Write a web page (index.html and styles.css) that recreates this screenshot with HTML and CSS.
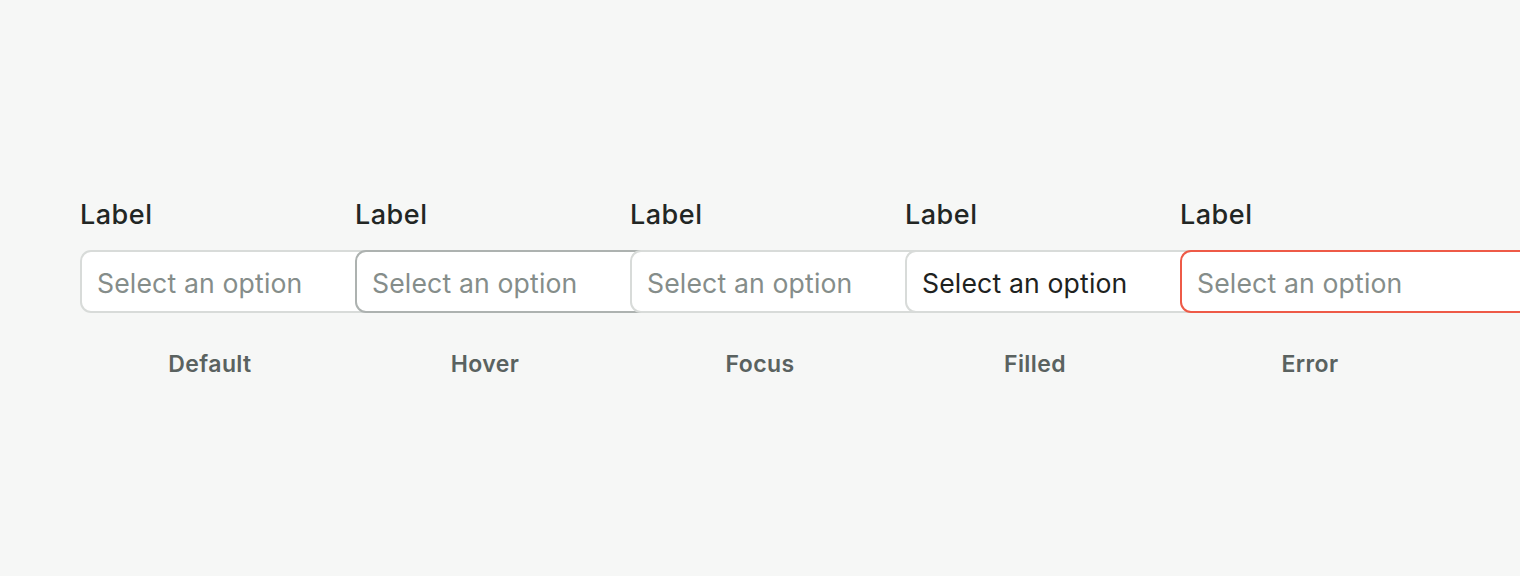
FILE: index.html
```html
<!DOCTYPE html>
<html>
<head>
<meta charset="utf-8">
<link rel="stylesheet" href="styles.css">
</head>
<body>
<div class="row">
  <div class="item">
    <div class="field">
      <div class="label">Label</div>
      <div class="select"><span class="placeholder">Select an option</span></div>
    </div>
    <div class="caption">Default</div>
  </div>
  <div class="item">
    <div class="field">
      <div class="label">Label</div>
      <div class="select hover"><span class="placeholder">Select an option</span></div>
    </div>
    <div class="caption">Hover</div>
  </div>
  <div class="item">
    <div class="field">
      <div class="label">Label</div>
      <div class="select focus"><span class="placeholder">Select an option</span></div>
    </div>
    <div class="caption">Focus</div>
  </div>
  <div class="item">
    <div class="field">
      <div class="label">Label</div>
      <div class="select filled"><span class="value">Select an option</span></div>
    </div>
    <div class="caption">Filled</div>
  </div>
  <div class="item">
    <div class="field">
      <div class="label">Label</div>
      <div class="select error"><span class="placeholder">Select an option</span></div>
    </div>
    <div class="caption">Error</div>
  </div>
</div>
</body>
</html>
```
FILE: styles.css
```css
html, body {
  margin: 0;
  padding: 0;
  background: #f6f7f6;
  font-family: Inter, "Noto Sans", sans-serif;
  overflow: hidden;
  height: 576px;
}
.row {
  display: flex;
  gap: 15px;
  padding: 197px 0 0 80px;
}
.item {
  width: 260px;
  flex: none;
  display: flex;
  flex-direction: column;
  gap: 36px;
}
.field {
  display: flex;
  flex-direction: column;
  gap: 17px;
}
.label {
  font-size: 27px;
  letter-spacing: 0.5px;
  font-weight: 500;
  color: #222624;
  line-height: 36px;
}
.select {
  width: 380px;
  height: 63px;
  box-sizing: border-box;
  background: #fff;
  border: 2px solid #d8dbd9;
  border-radius: 11px;
  display: flex;
  align-items: center;
  padding: 3px 15px 0;
  font-size: 26.6px;
  letter-spacing: 0.15px;
  line-height: 1;
}
.select.hover {
  border-color: #adb2b0;
}
.select.error {
  border-color: #ee5a47;
}
.placeholder {
  color: #858d8a;
}
.value {
  color: #1e2220;
}
.caption {
  text-align: center;
  font-size: 23px;
  letter-spacing: 0.4px;
  font-weight: 600;
  color: #5a6260;
  line-height: 30px;
}
```
